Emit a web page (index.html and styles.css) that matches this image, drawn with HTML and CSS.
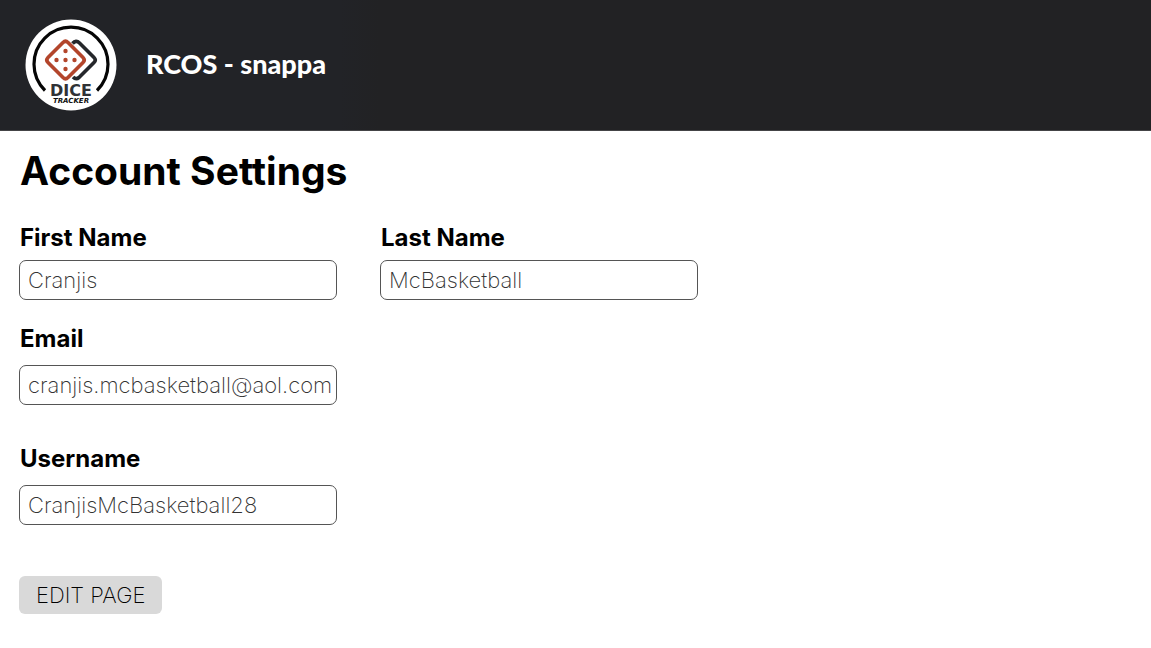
FILE: index.html
```html
<!DOCTYPE html>
<html lang="en">
<head>
<meta charset="utf-8">
<meta name="viewport" content="width=device-width, initial-scale=1">
<title>Account Settings</title>
<link rel="stylesheet" href="styles.css">
</head>
<body>
<header class="site-header">
  <svg class="logo" viewBox="0 0 92 92" role="img" aria-label="Dice Tracker">
    <circle cx="46" cy="46" r="45.500" fill="#fff"/>
    <path d="M20 71.500A37 37 0 1 1 72 71.500" fill="none" stroke="#050505" stroke-width="3.200"/>
    <g fill="none" stroke-width="3.600" stroke-linejoin="round">
      <path d="M47.500 24.500Q51 20.500 54.500 24L69 38.500Q71.500 41 69 43.500L54 58.500Q51 61 48 58" stroke="#25272b"/>
      <path d="M38 23.500Q40.500 21 43 23.500L58 38.500Q60.500 41 58 43.500L43 58.500Q40.500 61 38 58.500L23 43.500Q20.500 41 23 38.500Z" stroke="#b3452b"/>
    </g>
    <g fill="#b3452b">
      <circle cx="40.500" cy="32" r="2.200"/>
      <circle cx="31.500" cy="41" r="2.200"/>
      <circle cx="40.500" cy="41" r="2.200"/>
      <circle cx="49.500" cy="41" r="2.200"/>
      <circle cx="40.500" cy="50" r="2.200"/>
    </g>
    <text class="logo-name" x="46" y="77" text-anchor="middle">DICE</text>
    <text class="logo-sub" x="46" y="84" text-anchor="middle">TRACKER</text>
  </svg>
  <span class="brand">RCOS - snappa</span>
</header>
<main class="settings">
  <h1 class="title">Account Settings</h1>
  <form class="form">
    <div class="row">
      <div class="field">
        <label class="label" for="first">First Name</label>
        <input class="input" id="first" type="text" value="Cranjis">
      </div>
      <div class="field">
        <label class="label" for="last">Last Name</label>
        <input class="input" id="last" type="text" value="McBasketball">
      </div>
    </div>
    <div class="field field-roomy field-email">
      <label class="label" for="email">Email</label>
      <input class="input" id="email" type="email" value="cranjis.mcbasketball@aol.com">
    </div>
    <div class="field field-roomy field-user">
      <label class="label" for="user">Username</label>
      <input class="input" id="user" type="text" value="CranjisMcBasketball28">
    </div>
    <button class="edit" type="button">EDIT PAGE</button>
  </form>
</main>
</body>
</html>
```

FILE: styles.css
```css
* { box-sizing: border-box; }
body {
  margin: 0;
  background: #fff;
  color: #000;
  font-family: Inter, "Liberation Sans", sans-serif;
}
.site-header {
  display: flex;
  align-items: center;
  gap: 29px;
  padding: 19px 25px;
  border-bottom: 1px solid #444446;
  background: linear-gradient(90deg, #222327 340px, #222224 380px);
}
.logo { width: 92px; height: 92px; flex: none; }
.logo-name {
  font: 700 16px "DejaVu Sans", sans-serif;
  fill: #303235;
}
.logo-sub {
  font: italic 700 7px "DejaVu Sans", sans-serif;
  fill: #111;
}
.brand {
  margin-bottom: 2px;
  color: #fff;
  font: 900 27px/32px Lato, sans-serif;
}
.settings { padding: 16px 19px; }
.title {
  margin: 0;
  padding-left: 1px;
  font-size: 39px;
  line-height: 48px;
  font-weight: 700;
  font-variant-ligatures: none;
}
.form {
  display: flex;
  flex-direction: column;
  align-items: flex-start;
  margin-top: 28px;
}
.row { display: flex; flex-wrap: wrap; gap: 24px 43px; }
.field {
  display: flex;
  flex-direction: column;
  gap: 7px;
  width: 318px;
  max-width: 100%;
}
.field-roomy { gap: 11px; }
.field-email { margin-top: 24px; }
.field-user { margin-top: 39px; }
.label {
  padding-left: 1px;
  font-size: 24px;
  line-height: 30px;
  font-weight: 700;
}
.input {
  width: 100%;
  height: 40px;
  padding: 0 0 0 8px;
  border: 1px solid #555;
  border-radius: 7px;
  background: #fff;
  color: #333;
  font: 200 22px/28px Inter, sans-serif;
}
.edit {
  margin-top: 51px;
  padding: 5px 17px;
  border: 0;
  border-radius: 6px;
  background: #d9d9d9;
  color: #000;
  font: 200 22px/28px Inter, sans-serif;
}
```
